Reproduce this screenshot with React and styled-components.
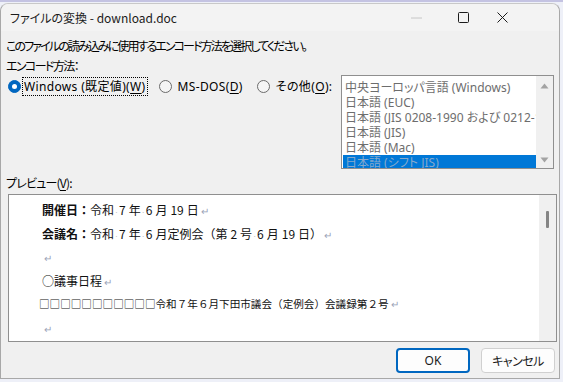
import React from "react";
import styled, { createGlobalStyle } from "styled-components";

const GlobalStyle = createGlobalStyle`
  body {
    margin: 0;
    background: #d9dbe6;
    font-family: "Noto Sans", "Noto Sans CJK JP", sans-serif;
  }
`;

const Desktop = styled.div`
  width: 563px;
  height: 382px;
  overflow: hidden;
  padding-top: 3px;
  box-sizing: border-box;
  background: linear-gradient(#eef0f8 0, #9a96cc 1px, #eef0f8 2px);
`;

const Window = styled.div`
  width: 560px;
  height: 376px;
  box-sizing: border-box;
  background: #f0f0f0;
  border: 1px solid #a8a8a8;
  border-top-color: #c8c8c8;
  border-radius: 8px 8px 0 0;
  display: flex;
  flex-direction: column;
  color: #000;
  font-size: 12px;
  font-feature-settings: "palt";
`;

const TitleBar = styled.div`
  height: 27px;
  display: flex;
  align-items: center;
  background: #f3f3f3;
  border-radius: 8px 8px 0 0;
  padding: 0 42px 0 9px;
`;

const Title = styled.div`
  flex: 1;
  font-size: 12px;
  color: #1b1b1b;
  font-family: "Noto Sans CJK JP", sans-serif;
`;

const Caption = styled.div`
  width: ${(p) => p.w}px;
  height: 27px;
  display: flex;
  align-items: center;
  justify-content: center;
`;

const Body = styled.div`
  flex: 1;
  display: flex;
  flex-direction: column;
  padding: 5px 4px 0 5px;
`;

const Line = styled.div`
  height: ${(p) => p.h || 20}px;
  line-height: ${(p) => p.h || 20}px;
  white-space: nowrap;
  letter-spacing: ${(p) => p.ls || 0}px;
  font-family: "Noto Sans CJK JP", sans-serif;
`;

const Key = styled.span`
  text-decoration: underline;
  text-underline-offset: 2px;
`;

const EncodingRow = styled.div`
  display: flex;
  align-items: flex-start;
`;

const Radios = styled.div`
  flex: 1;
  display: flex;
  align-items: center;
  height: 22px;
  padding-left: 2px;
`;

const Radio = styled.div`
  display: flex;
  align-items: center;
  margin-right: ${(p) => p.mr || 0}px;
`;

const Dot = styled.span`
  width: 13px;
  height: 13px;
  box-sizing: border-box;
  border-radius: 50%;
  flex: none;
  background: ${(p) => (p.on ? "#0067c0" : "#f5f5f5")};
  border: 1px solid ${(p) => (p.on ? "#0067c0" : "#6b6b6b")};
  display: flex;
  align-items: center;
  justify-content: center;
  &::after {
    content: "";
    width: 5px;
    height: 5px;
    border-radius: 50%;
    background: #fff;
    display: ${(p) => (p.on ? "block" : "none")};
  }
`;

const RadioText = styled.span`
  margin-left: ${(p) => (p.focus ? 1 : 4)}px;
  padding: 0 2px;
  height: 19px;
  line-height: 19px;
  letter-spacing: 0.35px;
  outline: ${(p) => (p.focus ? "1px dotted #000" : "none")};
  outline-offset: -1px;
  white-space: nowrap;
`;

const ListBox = styled.div`
  width: 213px;
  height: 94px;
  box-sizing: border-box;
  border: 1px solid #8f8f8f;
  background: #fff;
  display: flex;
  margin-right: 1px;
`;

const Items = styled.div`
  flex: 1;
  padding: 4px 0 0 1px;
  overflow: hidden;
`;

const Item = styled.div`
  height: 15px;
  line-height: 15px;
  padding-left: 2px;
  white-space: nowrap;
  overflow: hidden;
  color: ${(p) => (p.sel ? "#86a9cc" : "#6d6d6d")};
  background: ${(p) => (p.sel ? "#0078d7" : "transparent")};
`;

const ScrollBar = styled.div`
  width: 17px;
  background: #f0f0f0;
  display: flex;
  flex-direction: column;
  justify-content: ${(p) => (p.arrows ? "space-between" : "flex-start")};
  align-items: center;
  padding: ${(p) => (p.arrows ? "7px 0 5px" : "16px 0 0")};
  box-sizing: border-box;
`;

const Thumb = styled.div`
  width: 3px;
  height: 17px;
  background: #858585;
  border-radius: 1px;
`;

const Preview = styled.div`
  margin: 2px 0 0 2px;
  width: 549px;
  height: 148px;
  box-sizing: border-box;
  border: 1px solid #8f8f8f;
  background: #fff;
  display: flex;
`;

const Doc = styled.div`
  flex: 1;
  padding: 3px 0 0 ${(p) => p.indent}px;
  overflow: hidden;
  font-family: "Noto Sans CJK JP", sans-serif;
`;

const DocLine = styled.div`
  height: 23.5px;
  line-height: 23.5px;
  white-space: nowrap;
  font-size: ${(p) => p.fs || 12}px;
  font-feature-settings: normal;
  margin-left: ${(p) => p.shift || 0}px;
  color: #111;
`;

const Bold = styled.span`
  font-weight: 700;
`;

const Sp = styled.span`
  display: inline-block;
  width: 5px;
  text-align: center;
  color: #b4b4b4;
  font-size: 7px;
`;

const Gap = styled.span`
  display: inline-block;
  width: 3px;
`;

const Ret = styled.span`
  color: #9aa4b8;
  font-size: 10px;
  margin-left: 2px;
`;

const Buttons = styled.div`
  display: flex;
  justify-content: flex-end;
  gap: 11px;
  padding: 6px 0 0;
`;

const Button = styled.button`
  width: 74px;
  height: 25px;
  box-sizing: border-box;
  border-radius: 4px;
  font-family: "Noto Sans", "Noto Sans CJK JP", sans-serif;
  font-size: 12px;
  font-feature-settings: "palt";
  letter-spacing: ${(p) => (p.primary ? 0 : -0.5)}px;
  color: #1b1b1b;
  background: #fdfdfd;
  border: ${(p) => (p.primary ? "2px solid #0067c0" : "1px solid #d0d0d0")};
  padding: 0;
`;

const Arrow = ({ down }) => (
  <svg width="9" height="6" viewBox="0 0 9 6">
    <path d={down ? "M0.5 0.5h8L4.5 5.5z" : "M0.5 5.5h8L4.5 0.5z"} fill="#a3a3a3" />
  </svg>
);

const S = () => <Sp>·</Sp>;
const G = () => <Gap />;

export default function App() {
  return (
    <>
      <GlobalStyle />
      <Desktop>
        <Window>
          <TitleBar>
            <Title>ファイルの変換 - download.doc</Title>
            <Caption w={46}>
              <svg width="11" height="2" viewBox="0 0 11 2">
                <path d="M0 1h11" stroke="#c6c6c6" strokeWidth="1" />
              </svg>
            </Caption>
            <Caption w={48}>
              <svg width="11" height="11" viewBox="0 0 11 11">
                <rect x="0.5" y="0.5" width="10" height="10" rx="1" fill="none" stroke="#1b1b1b" />
              </svg>
            </Caption>
            <Caption w={30}>
              <svg width="11" height="11" viewBox="0 0 11 11">
                <path d="M0.5 0.5l10 10M10.5 0.5l-10 10" stroke="#1b1b1b" strokeWidth="1" />
              </svg>
            </Caption>
          </TitleBar>
          <Body>
            <Line ls={-1.9}>このファイルの読み込みに使用するエンコード方法を選択してください。</Line>
            <Line h={19} ls={-1.6}>エンコード方法：</Line>
            <EncodingRow>
              <Radios>
                <Radio mr={11}>
                  <Dot on />
                  <RadioText focus>
                    Windows (既定値)(<Key>W</Key>)
                  </RadioText>
                </Radio>
                <Radio mr={12}>
                  <Dot />
                  <RadioText>
                    MS-DOS(<Key>D</Key>)
                  </RadioText>
                </Radio>
                <Radio>
                  <Dot />
                  <RadioText>
                    その他(<Key>O</Key>):
                  </RadioText>
                </Radio>
              </Radios>
              <ListBox>
                <Items>
                  <Item>中央ヨーロッパ言語 (Windows)</Item>
                  <Item>日本語 (EUC)</Item>
                  <Item>日本語 (JIS 0208-1990 および 0212-1990)</Item>
                  <Item>日本語 (JIS)</Item>
                  <Item>日本語 (Mac)</Item>
                  <Item sel>日本語 (シフト JIS)</Item>
                </Items>
                <ScrollBar arrows>
                  <Arrow />
                  <Arrow down />
                </ScrollBar>
              </ListBox>
            </EncodingRow>
            <Line h={18} ls={-0.8} style={{ marginTop: 5 }}>
              プレビュー(<Key>V</Key>):
            </Line>
            <Preview>
              <Doc indent={33}>
                <DocLine>
                  <Bold>開催日：</Bold>令和<S />7<G />年<S />6<G />月<G />19<G />日<Ret>↵</Ret>
                </DocLine>
                <DocLine>
                  <Bold>会議名：</Bold>令和<S />7<G />年<S />6<G />月定例会（第<G />2<G />号<S />6<G />月<G />19<G />日）<Ret>↵</Ret>
                </DocLine>
                <DocLine>
                  <Ret>↵</Ret>
                </DocLine>
                <DocLine>
                  ○議事日程<Ret>↵</Ret>
                </DocLine>
                <DocLine fs={10.6} shift={-3}>
                  □□□□□□□□□□□令和７年６月下田市議会（定例会）会議録第２号<Ret>↵</Ret>
                </DocLine>
                <DocLine>
                  <Ret>↵</Ret>
                </DocLine>
              </Doc>
              <ScrollBar>
                <Thumb />
              </ScrollBar>
            </Preview>
            <Buttons>
              <Button primary>OK</Button>
              <Button>キャンセル</Button>
            </Buttons>
          </Body>
        </Window>
      </Desktop>
    </>
  );
}
